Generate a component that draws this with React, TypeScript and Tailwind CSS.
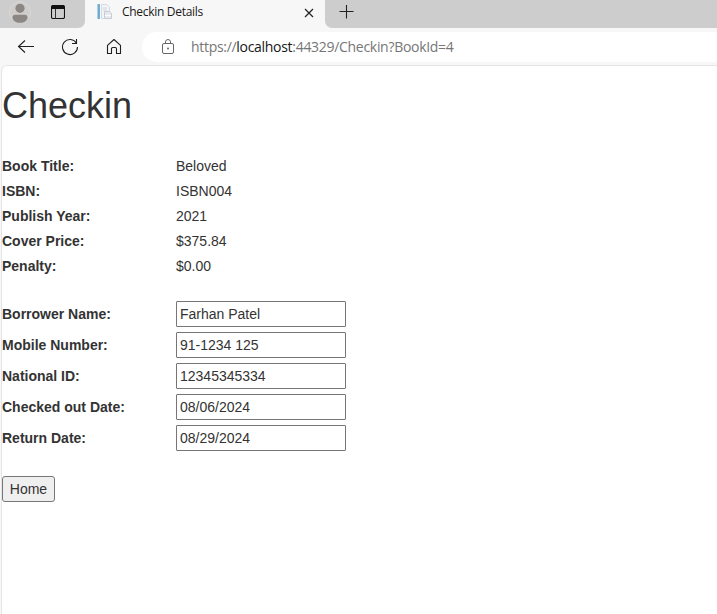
import React from "react";

const book: [string, string][] = [
  ["Book Title:", "Beloved"],
  ["ISBN:", "ISBN004"],
  ["Publish Year:", "2021"],
  ["Cover Price:", "$375.84"],
  ["Penalty:", "$0.00"],
];

const borrower: [string, string][] = [
  ["Borrower Name:", "Farhan Patel"],
  ["Mobile Number:", "91-1234 125"],
  ["National ID:", "12345345334"],
  ["Checked out Date:", "08/06/2024"],
  ["Return Date:", "08/29/2024"],
];

function TabStrip() {
  return (
    <div className="flex h-7 bg-[#f7f7f7]">
      <div className="flex w-[85px] shrink-0 rounded-br-[7px] bg-[#cdcdcd]">
        <svg className="ml-[9px] mt-px h-[22px] w-[22px]" viewBox="0 0 22 22">
          <circle cx="11" cy="11" r="10.500" fill="#d0cecc" stroke="#dad8d6" />
          <circle cx="11" cy="7.300" r="4.600" fill="#8b8784" />
          <path d="M3.500 16.200c0-1.500 1-2.400 2.500-2.400h10c1.500 0 2.500.9 2.500 2.400 0 3.300-3.200 5.600-7.500 5.600s-7.500-2.300-7.500-5.600z" fill="#8b8784" />
        </svg>
        <svg className="ml-5 mt-[5px] h-[14px] w-[14px]" viewBox="0 0 14 14" fill="none" stroke="#111">
          <rect x=".5" y=".5" width="13" height="13" rx="1.500" strokeWidth="1.100" />
          <path d="M1 2.500h12" strokeWidth="3" />
          <path d="M4.500 4v9.500" stroke="#333" />
        </svg>
      </div>
      <div className="flex w-[240px] shrink-0">
        <svg className="ml-[11px] mt-1 h-4 w-4" viewBox="0 0 16 16" fill="none">
          <path d="M1 0h3v15H1z" fill="#72add0" />
          <path d="M1 0h1v15H1z" fill="#a9d0e4" />
          <path d="M5.500.500h5.500l2.500 2.500v11.500h-8z" fill="#f2f4f8" stroke="#d5dae3" />
          <path d="M7 4h4M7 6h4" stroke="#d0d5de" />
          <path d="M8.500 7.500h5l2 2v5h-7z" fill="#e6eaf0" stroke="#c6ccd7" />
          <path d="M9 11.500h6" stroke="#fff" />
        </svg>
        <span className="ml-[10px] mt-1 w-[180px] whitespace-nowrap font-['Open_Sans',sans-serif] text-[12px] leading-4 tracking-[-0.3px] text-[#191919]">Checkin Details</span>
        <svg className="ml-[2px] mt-2 h-[10px] w-[10px] shrink-0" viewBox="0 0 10 10" stroke="#222" strokeWidth="1.200">
          <path d="M1 1l8 8M9 1L1 9" />
        </svg>
      </div>
      <div className="flex-1 rounded-bl-[7px] bg-[#cdcdcd]">
        <svg className="ml-[14px] mt-[5px] h-[14px] w-[15px]" viewBox="0 0 15 14" stroke="#222" strokeWidth="1.100">
          <path d="M.5 6.500h14M7.500 0v13.500" />
        </svg>
      </div>
    </div>
  );
}

function Toolbar() {
  return (
    <div className="flex h-[37px] bg-[#f7f7f7] pt-1">
      <svg className="ml-[17px] mt-2 h-[14px] w-[18px]" viewBox="0 0 18 14" fill="none" stroke="#202020" strokeWidth="1.100">
        <path d="M17 6.500H1.500M8 .5l-6.500 6L8 12.500" />
      </svg>
      <svg className="ml-[26px] mt-[6px] h-[18px] w-[18px]" viewBox="0 0 18 18" fill="none" stroke="#202020" strokeWidth="1.100">
        <path d="M15.500 5.300A7.500 7.500 0 1 0 16.500 9M15.500 1v4.500H11" />
      </svg>
      <svg className="ml-[27px] mt-[6px] h-[18px] w-4" viewBox="0 0 16 18" fill="none" stroke="#202020" strokeWidth="1.100" strokeLinejoin="round">
        <path d="M1.500 7.300L8 1.500l6.500 5.800v8.200h-4v-4.700a1.300 1.300 0 0 0-1.300-1.300H6.800a1.300 1.300 0 0 0-1.300 1.300v4.700h-4z" />
      </svg>
      <div className="ml-5 flex h-[30px] flex-1 rounded-l-full bg-white">
        <svg className="ml-5 mt-[7px] h-4 w-3" viewBox="0 0 12 16" fill="none" stroke="#666">
          <rect x=".5" y="4.500" width="11" height="10" rx="1.500" />
          <path d="M3.500 4.500V3a2.500 2.500 0 0 1 5 0v1.500" />
          <circle cx="6" cy="9.500" r="1" fill="#666" stroke="none" />
        </svg>
        <span className="ml-[17px] mt-[5px] whitespace-nowrap font-['Open_Sans',sans-serif] text-[14px] leading-5 tracking-[-0.3px] text-[#767676]">
          https://<span className="text-[#161616]">localhost</span>:44329/Checkin?BookId=4
        </span>
      </div>
    </div>
  );
}

export default function App() {
  return (
    <div className="flex h-[614px] w-[717px] flex-col overflow-hidden bg-[#f7f7f7]">
      <TabStrip />
      <Toolbar />
      <main className="ml-px flex-1 rounded-tl-[6px] border-l border-t border-[#e5e5e5] bg-white font-['Liberation_Sans',Arial,sans-serif] text-[14px] leading-5 text-[#333]">
        <h1 className="mt-5 text-[36px] leading-10">Checkin</h1>
        <dl className="mt-[30px]">
          {book.map(([label, value]) => (
            <div key={label} className="flex h-[25px]">
              <dt className="w-[174px] font-bold">{label}</dt>
              <dd>{value}</dd>
            </div>
          ))}
        </dl>
        <div className="mt-5 flex flex-col gap-[5px]">
          {borrower.map(([label, value]) => (
            <label key={label} className="flex h-[26px] items-center">
              <span className="w-[174px] font-bold">{label}</span>
              <input
                className="h-[26px] w-[170px] rounded-[1px] border border-[#767676] bg-white px-[3px] leading-5 outline-none"
                defaultValue={value}
              />
            </label>
          ))}
        </div>
        <button className="mt-[25px] block h-[26px] w-[53px] rounded-[3px] border border-[#767676] bg-[#efefef] leading-5">Home</button>
      </main>
    </div>
  );
}
